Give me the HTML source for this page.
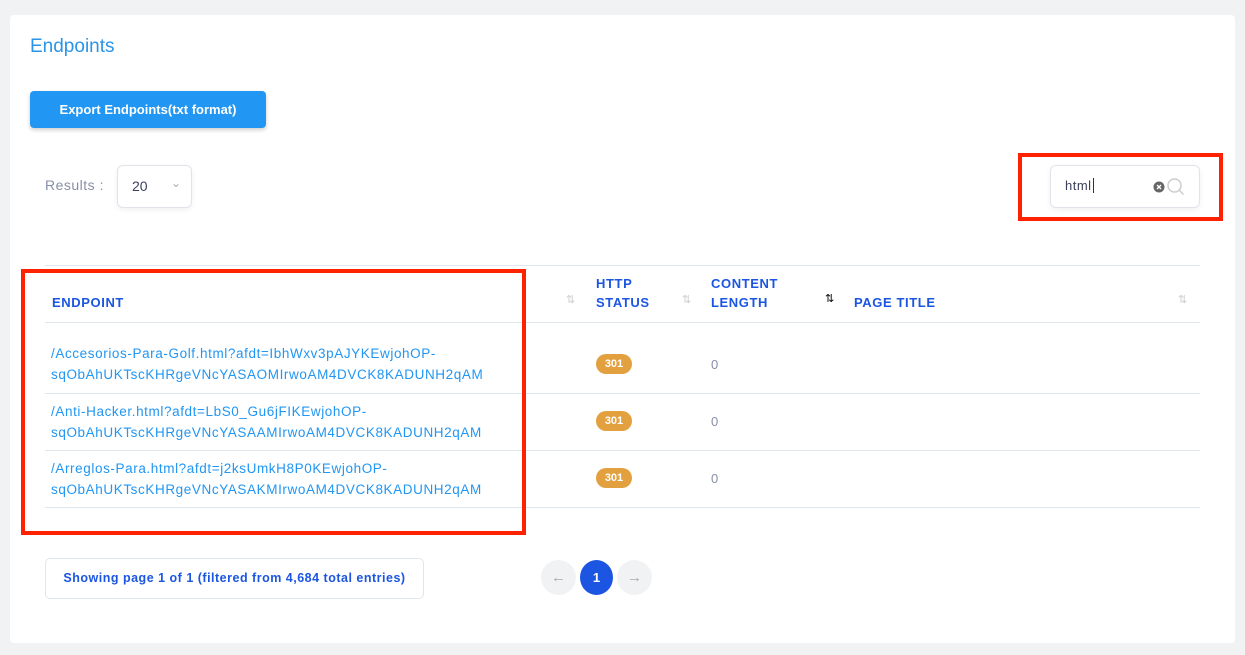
<!DOCTYPE html>
<html><head><style>
*{box-sizing:border-box;margin:0;padding:0}
body{width:1245px;height:655px;background:#f1f2f4;font-family:"Liberation Sans",sans-serif;position:relative;overflow:hidden}
.card{position:absolute;left:10px;top:15px;width:1225px;height:628px;background:#fff;border-radius:4px}
.abs{position:absolute}
.h{left:30px;top:36px;font-size:19px;color:#2a95e8}
.btn{left:30px;top:91px;width:236px;height:37px;background:#2196f3;border-radius:4px;color:#fff;font-size:13px;font-weight:bold;text-align:center;line-height:37px;box-shadow:0 2px 4px rgba(0,0,0,.2)}
.lab{left:45px;top:177px;font-size:14px;color:#888ea8;letter-spacing:.5px}
.sel{left:117px;top:165px;width:75px;height:43px;border:1px solid #e0e4ea;border-radius:6px;font-size:14px;color:#3b3f5c;padding:12px 0 0 14px;box-shadow:0 2px 6px rgba(0,0,0,.06)}
.line{height:1px;background:#e0e6ed;left:45px;width:1155px}
.th{font-size:13px;font-weight:bold;color:#1b55e2;letter-spacing:.6px;line-height:19px}
.sort{font-size:11px;color:#ccc}
.ep{left:51px;font-size:13.5px;color:#2196f3;line-height:21px;letter-spacing:.6px}
.badge{left:596px;width:36px;height:20px;border-radius:10px;background:#e2a03f;color:#fff;font-size:11px;font-weight:bold;text-align:center;line-height:20px}
.z{left:711px;font-size:13px;color:#888ea8}
.red{border:4px solid #ff2200}
</style></head><body>
<div class="card"></div>
<div class="abs h">Endpoints</div>
<div class="abs btn">Export Endpoints(txt format)</div>
<div class="abs lab">Results :</div>
<div class="abs sel">20<span style="position:absolute;right:10px;top:10px;color:#aaa;font-size:12px">&#8964;</span></div>
<div class="abs" style="left:1050px;top:165px;width:150px;height:43px;border:1px solid #e0e4ea;border-radius:6px;box-shadow:0 2px 6px rgba(0,0,0,.06)">
<span style="position:absolute;left:14px;top:12px;font-size:13px;color:#3b3f5c;letter-spacing:.5px">html<span style="border-left:1px solid #333;margin-left:1px"></span></span>
<svg style="position:absolute;left:102px;top:15px" width="12" height="12"><circle cx="6" cy="6" r="5.5" fill="#666"/><path d="M4 4l4 4M8 4l-4 4" stroke="#fff" stroke-width="1.4"/></svg>
<svg style="position:absolute;left:115px;top:11px" width="20" height="20"><circle cx="8.5" cy="8.5" r="6.5" fill="none" stroke="#ccc" stroke-width="1.5"/><path d="M13.5 13.5l4 4" stroke="#ccc" stroke-width="1.5"/></svg>
</div>
<div class="abs red" style="left:1018px;top:153px;width:205px;height:68px"></div>
<div class="abs line" style="top:265px"></div>
<div class="abs th" style="left:52px;top:293px">ENDPOINT</div>
<div class="abs sort" style="left:566px;top:293px">&#8645;</div>
<div class="abs th" style="left:596px;top:274px">HTTP<br>STATUS</div>
<div class="abs sort" style="left:682px;top:293px">&#8645;</div>
<div class="abs th" style="left:711px;top:274px">CONTENT<br>LENGTH</div>
<div class="abs sort" style="left:825px;top:292px;color:#000">&#8645;</div>
<div class="abs th" style="left:854px;top:293px">PAGE TITLE</div>
<div class="abs sort" style="left:1178px;top:293px">&#8645;</div>
<div class="abs line" style="top:322px"></div>
<div class="abs ep" style="top:343px">/Accesorios-Para-Golf.html?afdt=IbhWxv3pAJYKEwjohOP-<br>sqObAhUKTscKHRgeVNcYASAOMIrwoAM4DVCK8KADUNH2qAM</div>
<div class="abs badge" style="top:354px">301</div><div class="abs z" style="top:357px">0</div>
<div class="abs line" style="top:393px"></div>
<div class="abs ep" style="top:401px">/Anti-Hacker.html?afdt=LbS0_Gu6jFIKEwjohOP-<br>sqObAhUKTscKHRgeVNcYASAAMIrwoAM4DVCK8KADUNH2qAM</div>
<div class="abs badge" style="top:411px">301</div><div class="abs z" style="top:414px">0</div>
<div class="abs line" style="top:450px"></div>
<div class="abs ep" style="top:458px">/Arreglos-Para.html?afdt=j2ksUmkH8P0KEwjohOP-<br>sqObAhUKTscKHRgeVNcYASAKMIrwoAM4DVCK8KADUNH2qAM</div>
<div class="abs badge" style="top:468px">301</div><div class="abs z" style="top:471px">0</div>
<div class="abs line" style="top:507px"></div>
<div class="abs red" style="left:21px;top:269px;width:505px;height:266px"></div>
<div class="abs" style="left:45px;top:558px;width:379px;height:41px;border:1px solid #e0e6ed;border-radius:5px;font-size:12.5px;font-weight:bold;color:#1b55e2;text-align:center;line-height:39px;letter-spacing:.5px">Showing page 1 of 1 (filtered from 4,684 total entries)</div>
<div class="abs" style="left:541px;top:560px;width:35px;height:35px;border-radius:50%;background:#f1f2f3;color:#aaa;text-align:center;line-height:35px;font-size:15px">&#8592;</div>
<div class="abs" style="left:580px;top:560px;width:33px;height:35px;border-radius:50%;background:#1b55e2;color:#fff;text-align:center;line-height:35px;font-size:13px;font-weight:bold">1</div>
<div class="abs" style="left:617px;top:560px;width:35px;height:35px;border-radius:50%;background:#f1f2f3;color:#aaa;text-align:center;line-height:35px;font-size:15px">&#8594;</div>
</body></html>
